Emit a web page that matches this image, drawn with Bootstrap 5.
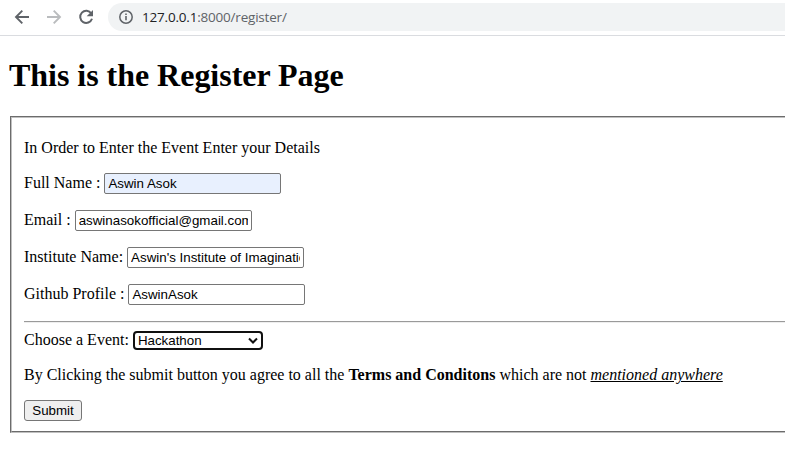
<!DOCTYPE html>
<html lang="en">
<head>
<meta charset="utf-8">
<meta name="viewport" content="width=device-width, initial-scale=1">
<title>Register</title>
<link href="https://cdn.jsdelivr.net/npm/bootstrap@5.3.0/dist/css/bootstrap.min.css" rel="stylesheet">
<style>
body{font:16px/18px "Liberation Serif","Times New Roman",serif;color:#000;background:#fff}
.toolbar{height:36px;border-bottom:1px solid #dadce0;padding:3px 0 4px 14px}
.toolbar svg{flex:none}
.address{height:28px;background:#f1f3f4;border-radius:14px 0 0 14px;margin-left:14px;padding-left:10px;font:13.5px/28px "Open Sans","Noto Sans",sans-serif;letter-spacing:-.2px;color:#5f6368}
.address b{font-weight:400;color:#202124}
.page-title{font-size:32px;line-height:36px;font-weight:700;letter-spacing:-.03px;margin:21px 0 23px 9px}
.register{border:2px groove #c0c0c0;border-right:0;margin-left:10px;padding:21px 0 10px 12px;height:317px}
.register p{margin:0 0 16px;white-space:nowrap}
.line{margin-bottom:16px;height:21px}
.line label{padding-bottom:1px}
.line input{width:177px;height:21px;border:1px solid #767676;border-radius:2px;padding:1px 3px;margin-left:4px;font:13.333px/15px "Liberation Sans",Arial,sans-serif;color:#000;background:#fff}
.line .autofilled{background:#e8f0fe}
.rule{border-top:1px solid #9a9a9a;border-bottom:1px solid #eee;height:2px}
.choose{height:19px;margin:8px 0 16px}
.choose label{padding-bottom:1px}
.choose select{appearance:none;width:130px;height:19px;border:2px solid #101010;border-radius:4px;margin-left:4px;padding:0 3px;font:13.333px/15px "Liberation Sans",Arial,sans-serif;color:#000;background:#fff;outline:0}
.picker svg{position:absolute;right:5px;top:6px;pointer-events:none}
.send{width:58px;height:21px;border:1px solid #767676;border-radius:3px;background:#efefef;font:13.333px/15px "Liberation Sans",Arial,sans-serif;color:#000}
</style>
</head>
<body class="overflow-hidden">
<header class="toolbar d-flex align-items-center">
  <svg width="16" height="16" viewBox="0 0 16 16" fill="none" stroke="#5f6368" stroke-width="1.9"><path d="M15 8H2.2M8.3 1.7L2 8l6.3 6.3"/></svg>
  <svg class="ms-3" width="16" height="16" viewBox="0 0 16 16" fill="none" stroke="#babcbe" stroke-width="1.9"><path d="M1 8h12.8M7.7 1.7L14 8l-6.3 6.3"/></svg>
  <svg class="ms-3" width="16" height="16" viewBox="0 0 16 16"><path d="M13.3 4.5A6.05 6.05 0 1 0 14 9.8" fill="none" stroke="#5f6368" stroke-width="2"/><path d="M15 1v6.3H8.7z" fill="#5f6368"/></svg>
  <div class="address flex-grow-1 d-flex align-items-center gap-2">
    <svg width="16" height="16" viewBox="0 0 16 16"><circle cx="8" cy="8" r="6.2" fill="none" stroke="#5f6368" stroke-width="1.5"/><path d="M7.2 7h1.6v4.3H7.2zM7.2 4.5h1.6V6H7.2z" fill="#5f6368"/></svg>
    <span><b>127.0.0.1</b>:8000/register/</span>
  </div>
</header>
<main>
  <h1 class="page-title">This is the Register Page</h1>
  <form class="register">
    <p>In Order to Enter the Event Enter your Details</p>
    <div class="line d-flex align-items-center"><label for="fn">Full Name :</label><input id="fn" class="autofilled" value="Aswin Asok"></div>
    <div class="line d-flex align-items-center"><label for="em">Email :</label><input id="em" value="aswinasokofficial@gmail.com"></div>
    <div class="line d-flex align-items-center"><label for="in">Institute Name:</label><input id="in" value="Aswin's Institute of Imagination"></div>
    <div class="line d-flex align-items-center"><label for="gh">Github Profile :</label><input id="gh" value="AswinAsok"></div>
    <div class="rule"></div>
    <div class="choose d-flex align-items-center"><label for="ev">Choose a Event:</label><span class="picker position-relative d-flex"><select id="ev"><option>Hackathon</option></select><svg width="10" height="8" viewBox="0 0 10 8" fill="none" stroke="#101010" stroke-width="2"><path d="M1 1.500l4 4 4-4"/></svg></span></div>
    <p>By Clicking the submit button you agree to all the <strong>Terms and Conditons</strong> which are not <u><em>mentioned anywhere</em></u></p>
    <button class="send d-flex align-items-center justify-content-center p-0" type="button">Submit</button>
  </form>
</main>
<script src="https://cdn.jsdelivr.net/npm/bootstrap@5.3.0/dist/js/bootstrap.bundle.min.js"></script>
</body>
</html>
